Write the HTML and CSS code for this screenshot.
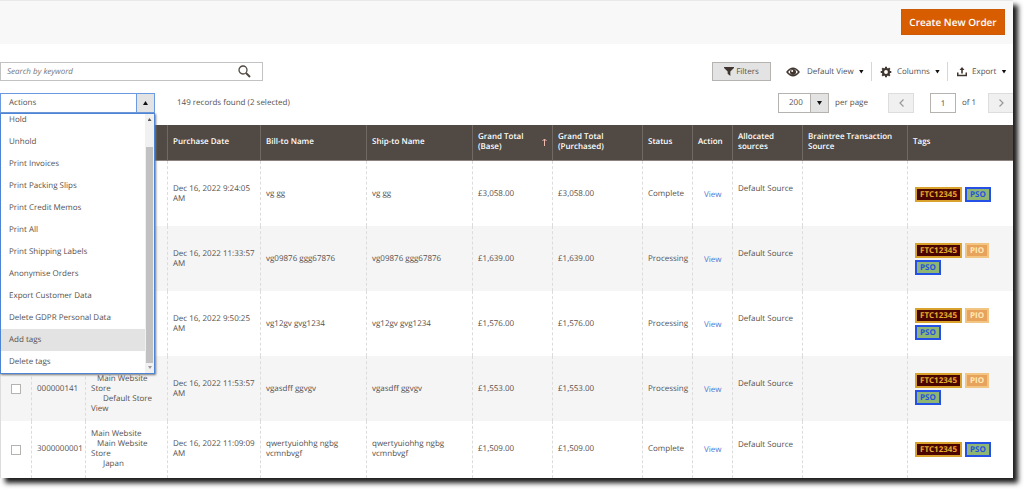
FILE: index.html
```html
<!DOCTYPE html>
<html lang="en">
<head>
<meta charset="utf-8">
<title>Orders</title>
<link rel="stylesheet" href="styles.css">
</head>
<body>
<main class="panel">
  <header class="page-actions"><button class="primary" type="button">Create New Order</button></header>

  <div class="toolbar">
    <form class="search">
      <input class="search-input" type="text" aria-label="Search by keyword" placeholder="Search by keyword">
      <button class="search-button" type="button" aria-label="Search">
        <svg width="13" height="13" viewBox="0 0 13 13"><circle cx="5" cy="5" r="4" fill="none" stroke="#514943" stroke-width="1.3"/><path d="M8 8l4 4" stroke="#514943" stroke-width="2"/></svg>
      </button>
    </form>
    <div class="tools">
      <button class="filters" type="button"><svg width="10" height="9" viewBox="0 0 11 10"><path d="M0 0h11v1L7 5v5L4 7.500V5L0 1z" fill="#41362f"/></svg>Filters</button>
      <button class="tool tool-view" type="button"><svg width="14" height="10" viewBox="0 0 14 10"><path d="M1 5Q7-2.500 13 5Q7 12.500 1 5z" fill="#fff" stroke="#41362f" stroke-width="1.400"/><circle cx="7" cy="5" r="3" fill="#41362f"/><circle cx="6.200" cy="4" r="1" fill="#fff"/></svg><span>Default View</span><i class="caret"></i></button>
      <button class="tool tool-columns" type="button"><svg width="12" height="12" viewBox="0 0 12 12"><circle cx="6" cy="6" r="3" fill="none" stroke="#41362f" stroke-width="2.200"/><path d="M6 .700v2M6 9.300v2M.700 6h2M9.300 6h2M2.200 2.200l1.400 1.400M8.400 8.400l1.400 1.400M2.200 9.800l1.400-1.400M8.400 3.600l1.400-1.400" stroke="#41362f" stroke-width="2"/></svg><span>Columns</span><i class="caret"></i></button>
      <button class="tool tool-export" type="button"><svg width="10" height="10" viewBox="0 0 10 10"><path d="M5 0l2.500 3H5.800v3.500H4.200V3H2.500z" fill="#41362f"/><path d="M.700 5.500v3h8.600v-3" fill="none" stroke="#41362f" stroke-width="1.600"/></svg><span>Export</span><i class="caret"></i></button>
    </div>
  </div>

  <div class="toolbar toolbar-second">
    <div class="actions">
      <button class="actions-toggle" type="button" aria-haspopup="true" aria-expanded="true"><span class="actions-label">Actions</span><span class="actions-arrow"><i class="caret caret-up"></i></span></button>
      <div class="menu">
        <ul class="menu-list">
          <li>Hold</li><li>Unhold</li><li>Print Invoices</li><li>Print Packing Slips</li><li>Print Credit Memos</li><li>Print All</li><li>Print Shipping Labels</li><li>Anonymise Orders</li><li>Export Customer Data</li><li>Delete GDPR Personal Data</li><li class="active">Add tags</li><li>Delete tags</li>
        </ul>
        <div class="scrollbar"><i class="scroll-arrow"></i><div class="thumb"></div><i class="scroll-arrow scroll-down"></i></div>
      </div>
    </div>
    <p class="records">149 records found (2 selected)</p>
    <div class="pager">
      <span class="size"><select id="size"><option>200</option></select><span class="size-arrow"><i class="caret"></i></span></span>
      <label class="per-page" for="size">per page</label>
      <button class="step" type="button" aria-label="Previous page"><svg width="5" height="8" viewBox="0 0 5 8"><path d="M4.500 .500L1 4l3.500 3.500" fill="none" stroke="#999" stroke-width="1.200"/></svg></button>
      <input class="page" id="page" type="text" value="1">
      <label class="of" for="page">of 1</label>
      <button class="step step-next" type="button" aria-label="Next page"><svg width="5" height="8" viewBox="0 0 5 8"><path d="M.500 .500L4 4 .500 7.500" fill="none" stroke="#999" stroke-width="1.200"/></svg></button>
    </div>
  </div>

  <table class="grid">
    <colgroup><col class="c-check"><col class="c-id"><col class="c-store"><col class="c-date"><col class="c-name"><col class="c-name"><col class="c-base"><col class="c-purchased"><col class="c-status"><col class="c-action"><col class="c-source"><col class="c-braintree"><col class="c-name"></colgroup>
    <thead><tr><th></th><th>ID</th><th></th><th>Purchase Date</th><th>Bill-to Name</th><th>Ship-to Name</th>
      <th><div class="sorted">Grand Total (Base)<svg width="5" height="8" viewBox="0 0 5 8"><path d="M2.500 8V1M.500 3l2-2 2 2" fill="none" stroke="#f0b8ae"/></svg></div></th>
      <th>Grand Total<br>(Purchased)</th><th>Status</th><th>Action</th><th>Allocated sources</th><th>Braintree Transaction Source</th><th>Tags</th></tr></thead>
    <tbody>
      <tr><td><input type="checkbox" aria-label="Select order"></td><td></td><td></td><td>Dec 16, 2022 9:24:05 AM</td><td>vg gg</td><td>vg gg</td><td>£3,058.00</td><td>£3,058.00</td><td>Complete</td><td class="view"><a href="#">View</a></td><td class="source">Default Source</td><td></td><td><div class="tags"><span class="tag ftc">FTC12345</span><span class="tag pso">PSO</span></div></td></tr>
      <tr><td><input type="checkbox" aria-label="Select order"></td><td></td><td></td><td>Dec 16, 2022 11:33:57 AM</td><td>vg09876 ggg67876</td><td>vg09876 ggg67876</td><td>£1,639.00</td><td>£1,639.00</td><td>Processing</td><td class="view"><a href="#">View</a></td><td class="source">Default Source</td><td></td><td><div class="tags"><span class="tag ftc">FTC12345</span><span class="tag pio">PIO</span><span class="tag pso">PSO</span></div></td></tr>
      <tr><td><input type="checkbox" aria-label="Select order"></td><td></td><td></td><td>Dec 16, 2022 9:50:25 AM</td><td>vg12gv gvg1234</td><td>vg12gv gvg1234</td><td>£1,576.00</td><td>£1,576.00</td><td>Processing</td><td class="view"><a href="#">View</a></td><td class="source">Default Source</td><td></td><td><div class="tags"><span class="tag ftc">FTC12345</span><span class="tag pio">PIO</span><span class="tag pso">PSO</span></div></td></tr>
      <tr><td><input type="checkbox" aria-label="Select order"></td><td>000000141</td><td>Main Website<div class="store">Main Website Store</div><div class="store-view">Default Store View</div></td><td>Dec 16, 2022 11:53:57 AM</td><td>vgasdff ggvgv</td><td>vgasdff ggvgv</td><td>£1,553.00</td><td>£1,553.00</td><td>Processing</td><td class="view"><a href="#">View</a></td><td class="source">Default Source</td><td></td><td><div class="tags"><span class="tag ftc">FTC12345</span><span class="tag pio">PIO</span><span class="tag pso">PSO</span></div></td></tr>
      <tr class="last"><td><input type="checkbox" aria-label="Select order"></td><td>3000000001</td><td>Main Website<div class="store">Main Website Store</div><div class="store-view">Japan</div></td><td>Dec 16, 2022 11:09:09 AM</td><td>qwertyuiohhg ngbg vcmnbvgf</td><td>qwertyuiohhg ngbg vcmnbvgf</td><td>£1,509.00</td><td>£1,509.00</td><td>Complete</td><td class="view"><a href="#">View</a></td><td class="source">Default Source</td><td></td><td><div class="tags"><span class="tag ftc">FTC12345</span><span class="tag pso">PSO</span></div></td></tr>
    </tbody>
  </table>
</main>
</body>
</html>
```
FILE: styles.css
```css
* { box-sizing: border-box; }
body { margin: 0; padding: 0 11px 11px 0; background: #fff; color: #56514d; font: 8px/10px "Open Sans", sans-serif; text-rendering: geometricPrecision; }
button, input, select { font: inherit; color: inherit; text-rendering: inherit; margin: 0; padding: 0; border-radius: 0; }
.panel { background: #fff; box-shadow: 5px 5px 5px #1c1c1c; }
.page-actions { display: flex; justify-content: flex-end; padding: 8px 8px 9px; background: #f8f8f8; border-top: 1px solid #e9e9e9; }
.primary { width: 104px; height: 26px; border: 1px solid #cc5a06; background: #d85d00; color: #fff; font-size: 10px; font-weight: 600; }

.toolbar { display: flex; align-items: center; justify-content: space-between; padding-top: 18px; }
.toolbar-second { padding: 12px 0 12px; }
.search { display: flex; width: 263px; height: 19px; border: 1px solid #c2c2c2; outline: 0; }
.search-input { flex: 1; min-width: 0; padding-left: 6px; border: 0; outline: 0; background: none; }
.search-input::placeholder { color: #777; font-style: italic; opacity: 1; }
.search-button { width: 36px; padding: 0; border: 0; background: none; line-height: 0; }
.tools { display: flex; align-items: center; }
.filters { display: flex; align-items: center; justify-content: center; gap: 2px; width: 59px; height: 19px; margin-right: 15px; border: 1px solid #b5b2b0; background: #e3e3e3; }
.tool { display: flex; align-items: center; height: 19px; border: 0; background: none; white-space: nowrap; }
.tool svg { flex: none; }
.tool .caret { margin-left: auto; }
.tool-view { gap: 7px; width: 85px; padding-right: 11px; }
.tool-view .caret { margin-left: -2px; }
.tool-columns { gap: 5px; width: 76px; padding: 0 10px 0 8px; border-left: 1px solid #d6d6d6; }
.tool-export { gap: 5px; width: 66px; padding: 0 8px 0 9px; border-left: 1px solid #d6d6d6; }
.caret { flex: none; width: 5px; height: 4px; background: #111; clip-path: polygon(0 0, 100% 0, 50% 100%); }
.caret-up { transform: rotate(180deg); }

.actions { position: relative; width: 155px; }
.actions-toggle { display: flex; width: 100%; height: 20px; border: 1px solid #6b9ae0; background: #fff; text-align: left; }
.actions-label { flex: 1; align-self: center; padding-left: 8px; }
.actions-arrow { display: flex; align-items: center; justify-content: center; align-self: stretch; width: 18px; border-left: 1px solid #6b9ae0; background: #e3e3e3; }
.menu { position: absolute; z-index: 2; top: 20px; left: 0; display: flex; width: 100%; height: 261px; border: 1px solid #4d84d4; background: #fff; box-shadow: 1px 1px 2px #777; }
.menu-list { display: flex; flex: 1; flex-direction: column; justify-content: flex-end; margin: 0; padding: 0; overflow: hidden; list-style: none; }
.menu-list li { flex: none; height: 22px; padding-left: 8px; line-height: 22px; }
.menu-list .active { background: #e3e3e3; }
.scrollbar { display: flex; flex-direction: column; align-items: center; width: 9px; padding: 4px 0; background: #f1f1f1; }
.thumb { width: 7px; height: 216px; margin: auto 0 3px; background: #c1c1c1; }
.scroll-arrow { width: 4px; height: 3px; background: #555; clip-path: polygon(50% 0, 100% 100%, 0 100%); }
.scroll-down { background: #999; transform: rotate(180deg); }
.records { margin: 0 auto 0 22px; }
.pager { display: flex; align-items: center; overflow: hidden; }
.size { position: relative; width: 51px; height: 20px; margin-right: 6px; }
.size select { width: 100%; height: 100%; padding-left: 10px; border: 1px solid #b5b2b0; background: #fff; appearance: none; }
.size-arrow { position: absolute; top: 1px; right: 1px; bottom: 1px; display: flex; align-items: center; justify-content: center; width: 18px; border-left: 1px solid #b5b2b0; background: #e3e3e3; pointer-events: none; }
.per-page { width: 53px; }
.step { width: 26px; height: 20px; border: 1px solid #ddd; background: #f0f0f0; line-height: 0; }
.page { width: 26px; height: 20px; margin: 0 6px 0 16px; border: 1px solid #b5b2b0; text-align: center; }
.of { width: 26px; }
.step-next { border-right: 0; width: 25px; }

.grid { width: 100%; table-layout: fixed; border-collapse: separate; border-spacing: 0; }
.c-check { width: 31px; } .c-id { width: 54px; } .c-store { width: 82px; } .c-date { width: 93px; } .c-name { width: 106px; } .c-base { width: 80px; } .c-purchased { width: 90px; } .c-status { width: 50px; } .c-action { width: 40px; } .c-source { width: 70px; } .c-braintree { width: 105px; }
.grid th { height: 36px; padding: 0 5px 1px; border-left: 1px solid #706963; border-bottom: 1px solid #8a837f; background: #514943; color: #fff; font-weight: 600; text-align: left; }
.grid td { height: 65px; padding: 8px 3px 7px 5px; border-left: 1px dashed #dcdcdc; }
.grid tbody tr:nth-child(even) { background: #f5f5f5; }
.grid .last td { height: 57px; padding-bottom: 9px; }
.grid tr > :first-child, .grid .last > :first-child { padding: 0 0 0 10px; border-left-style: solid; }
.grid input { display: block; width: 10px; height: 10px; border: 1px solid #b5b2b0; background: #fff; appearance: none; }
.sorted { display: flex; align-items: center; justify-content: space-between; gap: 12px; }
.sorted svg { flex: none; }
.store { text-indent: 6px; }
.store-view { text-indent: 12px; }
.grid .view { padding-top: 10px; padding-left: 11px; }
.view a { color: #4f79d4; text-decoration: none; }
.grid .source, .grid .last .source { padding-bottom: 18px; }
.tags { display: flex; flex-wrap: wrap; gap: 2px 3px; padding-left: 2px; }
.tag { padding: 2px 3px 1px; border: 2px solid; font-weight: 700; line-height: 8px; }
.ftc { border-color: #d8a22c; background: #4b0500; color: #e9ac2b; }
.pso { border-color: #2450e6; background: #8fb573; color: #2450e6; }
.pio { border-color: #f3c583; background: #e7a35c; color: #ffe9b8; }
```
